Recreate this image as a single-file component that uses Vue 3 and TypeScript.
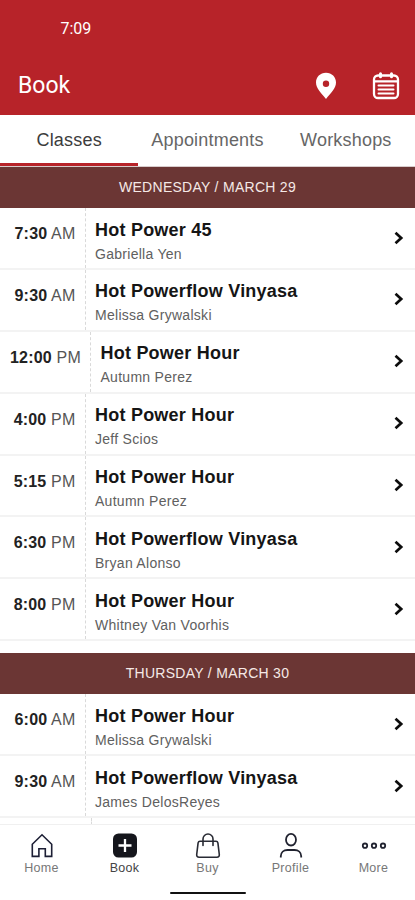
<script setup lang="ts">
interface ClassItem {
  time: string
  period: 'AM' | 'PM'
  title: string
  teacher: string
}
interface Day {
  label: string
  classes: ClassItem[]
}

const tabs: string[] = ['Classes', 'Appointments', 'Workshops']

const days: Day[] = [
  {
    label: 'WEDNESDAY / MARCH 29',
    classes: [
      { time: '7:30', period: 'AM', title: 'Hot Power 45', teacher: 'Gabriella Yen' },
      { time: '9:30', period: 'AM', title: 'Hot Powerflow Vinyasa', teacher: 'Melissa Grywalski' },
      { time: '12:00', period: 'PM', title: 'Hot Power Hour', teacher: 'Autumn Perez' },
      { time: '4:00', period: 'PM', title: 'Hot Power Hour', teacher: 'Jeff Scios' },
      { time: '5:15', period: 'PM', title: 'Hot Power Hour', teacher: 'Autumn Perez' },
      { time: '6:30', period: 'PM', title: 'Hot Powerflow Vinyasa', teacher: 'Bryan Alonso' },
      { time: '8:00', period: 'PM', title: 'Hot Power Hour', teacher: 'Whitney Van Voorhis' },
    ],
  },
  {
    label: 'THURSDAY / MARCH 30',
    classes: [
      { time: '6:00', period: 'AM', title: 'Hot Power Hour', teacher: 'Melissa Grywalski' },
      { time: '9:30', period: 'AM', title: 'Hot Powerflow Vinyasa', teacher: 'James DelosReyes' },
    ],
  },
]
</script>

<template>
  <div class="screen">
    <header class="top">
      <div class="clock">7:09</div>
      <div class="bar">
        <h1>Book</h1>
        <svg class="pin" width="22" height="28" viewBox="0 0 22 28">
          <path fill="#fff" fill-rule="evenodd" d="M11 .8C5.2.8 1 5 1 10.6c0 6 5.300 10.400 10 16.400 4.700-6 10-10.400 10-16.400C21 5 16.800.8 11 .8Zm0 7.700a3.200 3.200 0 1 1 0 6.400 3.200 3.200 0 0 1 0-6.400Z" />
        </svg>
        <svg class="cal" width="28" height="28" viewBox="0 0 28 28" fill="none" stroke="#fff" stroke-linecap="round">
          <rect x="2" y="3.500" width="24" height="22.500" rx="4" stroke-width="2.300" />
          <path d="M2.500 9.400h23" stroke-width="2.200" />
          <path d="M8.500 1.800v3M19.500 1.800v3" stroke-width="3" />
          <path d="M6.500 13.600h15M6.500 17.600h15M6.500 21.600h15" stroke-width="2" />
        </svg>
      </div>
    </header>

    <nav class="tabs">
      <div v-for="(tab, i) in tabs" :key="tab" class="tab" :class="{ active: i === 0 }">{{ tab }}</div>
    </nav>

    <main class="schedule">
      <section v-for="day in days" :key="day.label" class="day">
        <h2>{{ day.label }}</h2>
        <div v-for="item in day.classes" :key="item.time" class="row">
          <div class="time"><b>{{ item.time }}</b> {{ item.period }}</div>
          <div class="info">
            <div class="title">{{ item.title }}</div>
            <div class="teacher">{{ item.teacher }}</div>
          </div>
          <svg class="chev" width="10" height="14" viewBox="0 0 10 14">
            <path d="M1.500 1.800 7.200 7l-5.700 5.200" fill="none" stroke="#0c0c0c" stroke-width="2.700" />
          </svg>
        </div>
      </section>
      <div class="peek"></div>
    </main>

    <footer class="bottom">
      <div class="items">
        <div class="item">
          <svg width="28" height="28" viewBox="0 0 28 28" fill="none" stroke="#1d1f35" stroke-width="1.600">
            <path d="M4.300 12.300 14 2.800l9.700 9.500v12.100h-6.400v-7.700h-6.400v7.700H4.300Z" />
          </svg>
          <span>Home</span>
        </div>
        <div class="item on">
          <svg width="28" height="28" viewBox="0 0 28 28">
            <rect x="2" y="1.500" width="24" height="24" rx="5.500" fill="#15161c" />
            <path d="M14 7v13M7.500 13.500h13" stroke="#fff" stroke-width="2.300" />
          </svg>
          <span>Book</span>
        </div>
        <div class="item">
          <svg width="28" height="28" viewBox="0 0 28 28" fill="none" stroke="#292b34" stroke-width="1.600" stroke-linejoin="round" stroke-linecap="round">
            <path d="M6 9.300h16q1.600 0 1.900 1.600l1.400 11.600q.200 2.700-2.400 2.700H5.100q-2.600 0-2.400-2.700L4.100 10.900Q4.400 9.300 6 9.300Z" />
            <path d="M9 13.500V7a5 5 0 0 1 10 0v6.500" />
          </svg>
          <span>Buy</span>
        </div>
        <div class="item">
          <svg width="28" height="28" viewBox="0 0 28 28" fill="none" stroke="#20222f" stroke-width="1.800">
            <ellipse cx="14" cy="7.700" rx="5" ry="5.800" />
            <path d="M3.800 25.500v-1.200c0-4 3-6.300 6.700-6.300h7c3.700 0 6.700 2.300 6.700 6.300v1.200" />
          </svg>
          <span>Profile</span>
        </div>
        <div class="item">
          <svg width="28" height="28" viewBox="0 0 28 28" fill="none" stroke="#20222f" stroke-width="1.800">
            <circle cx="5" cy="13.700" r="2.200" />
            <circle cx="14" cy="13.700" r="2.200" />
            <circle cx="23" cy="13.700" r="2.200" />
          </svg>
          <span>More</span>
        </div>
      </div>
      <div class="handle"></div>
    </footer>
  </div>
</template>

<style>
body {
  background: #fff;
}
</style>

<style scoped>
.screen {
  display: flex;
  flex-direction: column;
  width: 415px;
  height: 900px;
  overflow: hidden;
  background: #fff;
  font-family: 'Liberation Sans', Arial, sans-serif;
}
.top {
  flex: none;
  box-sizing: border-box;
  height: 115px;
  background: #b72329;
  color: #fff;
  font-family: Roboto, sans-serif;
}
.clock {
  height: 56px;
  padding-left: 60.500px;
  font-size: 16px;
  line-height: 57px;
}
.bar {
  display: flex;
  align-items: center;
  height: 59px;
  padding: 0 15px 0 18px;
}
h1 {
  flex: 1;
  margin: 0;
  font-size: 23px;
  font-weight: 400;
  line-height: 60px;
}
.pin {
  margin-right: 35px;
}
.tabs {
  flex: none;
  display: grid;
  grid-template-columns: repeat(3, 1fr);
  height: 51px;
  border-bottom: 0.500px solid #d8cccc;
}
.tab {
  box-sizing: border-box;
  height: 51px;
  border-bottom: 3px solid transparent;
  color: #666;
  font-size: 18px;
  letter-spacing: 0.200px;
  line-height: 51px;
  text-align: center;
}
.tab.active {
  border-color: #b72329;
  color: #3c3c3c;
}
.schedule {
  flex: 1;
  min-height: 0;
  overflow: hidden;
}
.day + .day {
  margin-top: 12px;
}
h2 {
  margin: 0;
  height: 41px;
  background: #6b3634;
  color: #f5e9e6;
  font: 400 14px/40px 'Liberation Sans', Arial, sans-serif;
  letter-spacing: 0.280px;
  text-align: center;
}
.row {
  display: flex;
  box-sizing: border-box;
  height: 61.900px;
  border-bottom: 2px solid #f3f3f3;
}
.time {
  box-sizing: border-box;
  min-width: 86px;
  padding: 0 9.500px 0 10px;
  border-right: 1px dashed #d9d9d9;
  color: #555;
  font-size: 16px;
  letter-spacing: 0.200px;
  line-height: 52px;
  text-align: right;
  white-space: nowrap;
}
.time b {
  color: #222;
}
.info {
  flex: 1;
  padding: 9.500px 0 0 9px;
}
.title {
  color: #151515;
  font-size: 18px;
  font-weight: 700;
  letter-spacing: 0.230px;
  line-height: 24px;
}
.teacher {
  color: #606060;
  font-size: 14px;
  letter-spacing: 0.280px;
  line-height: 24px;
}
.chev {
  margin: 22.500px 11.500px 0 0;
}
.peek {
  width: 91px;
  height: 10px;
  border-right: 1px dashed #d9d9d9;
}
.bottom {
  flex: none;
  height: 76px;
  background: #fff;
  border-top: 1px solid #f0f0f0;
  box-sizing: border-box;
}
.items {
  display: grid;
  grid-template-columns: repeat(5, 1fr);
  height: 67px;
}
.item {
  display: flex;
  flex-direction: column;
  align-items: center;
  padding-top: 7px;
  color: #777;
  font-size: 12.500px;
  letter-spacing: 0.300px;
}
.item span {
  line-height: 16px;
}
.item.on {
  color: #444;
}
.handle {
  width: 76px;
  height: 2px;
  margin: 0 auto;
  border-radius: 1px;
  background: #111;
}
</style>
